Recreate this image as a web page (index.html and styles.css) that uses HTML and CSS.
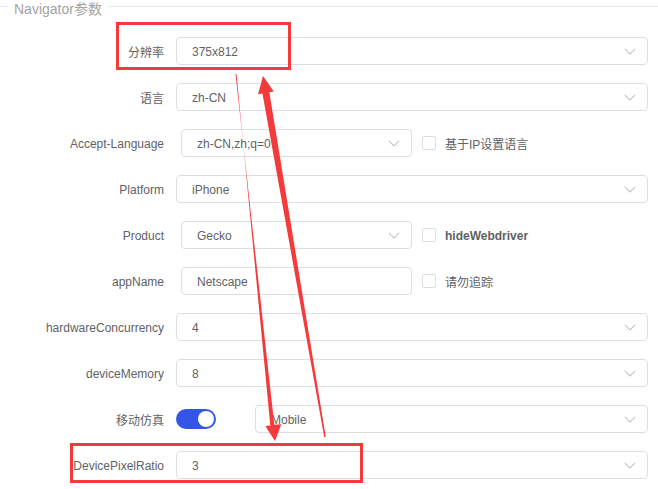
FILE: index.html
```html
<!DOCTYPE html>
<html lang="zh-CN">
<head>
<meta charset="utf-8">
<title>Navigator参数</title>
<link rel="stylesheet" href="styles.css">
</head>
<body>
<div class="panel">
  <div class="legend">
    <span class="legend-line short"></span>
    <span class="legend-text">Navigator参数</span>
    <span class="legend-line long"></span>
  </div>
  <div class="form">
    <div class="row">
      <span class="label">分辨率</span>
      <div class="select full"><span class="value">375x812</span><svg class="chev" viewBox="0 0 12 7" width="12" height="7"><path d="M0.8 0.8L6 6L11.2 0.8"/></svg></div>
    </div>
    <div class="row">
      <span class="label">语言</span>
      <div class="select full"><span class="value">zh-CN</span><svg class="chev" viewBox="0 0 12 7" width="12" height="7"><path d="M0.8 0.8L6 6L11.2 0.8"/></svg></div>
    </div>
    <div class="row">
      <span class="label">Accept-Language</span>
      <div class="select half"><span class="value">zh-CN,zh;q=0.</span><svg class="chev" viewBox="0 0 12 7" width="12" height="7"><path d="M0.8 0.8L6 6L11.2 0.8"/></svg></div>
      <span class="checkbox"></span><span class="check-text">基于IP设置语言</span>
    </div>
    <div class="row">
      <span class="label">Platform</span>
      <div class="select full"><span class="value">iPhone</span><svg class="chev" viewBox="0 0 12 7" width="12" height="7"><path d="M0.8 0.8L6 6L11.2 0.8"/></svg></div>
    </div>
    <div class="row">
      <span class="label">Product</span>
      <div class="select half"><span class="value">Gecko</span><svg class="chev" viewBox="0 0 12 7" width="12" height="7"><path d="M0.8 0.8L6 6L11.2 0.8"/></svg></div>
      <span class="checkbox"></span><span class="check-text bold">hideWebdriver</span>
    </div>
    <div class="row">
      <span class="label">appName</span>
      <div class="select half"><span class="value">Netscape</span></div>
      <span class="checkbox"></span><span class="check-text">请勿追踪</span>
    </div>
    <div class="row">
      <span class="label">hardwareConcurrency</span>
      <div class="select full"><span class="value">4</span><svg class="chev" viewBox="0 0 12 7" width="12" height="7"><path d="M0.8 0.8L6 6L11.2 0.8"/></svg></div>
    </div>
    <div class="row">
      <span class="label">deviceMemory</span>
      <div class="select full"><span class="value">8</span><svg class="chev" viewBox="0 0 12 7" width="12" height="7"><path d="M0.8 0.8L6 6L11.2 0.8"/></svg></div>
    </div>
    <div class="row">
      <span class="label">移动仿真</span>
      <span class="switch"><span class="knob"></span></span>
      <div class="select mobile"><span class="value">Mobile</span><svg class="chev" viewBox="0 0 12 7" width="12" height="7"><path d="M0.8 0.8L6 6L11.2 0.8"/></svg></div>
    </div>
    <div class="row">
      <span class="label">DevicePixelRatio</span>
      <div class="select full"><span class="value">3</span><svg class="chev" viewBox="0 0 12 7" width="12" height="7"><path d="M0.8 0.8L6 6L11.2 0.8"/></svg></div>
    </div>
  </div>
  <svg class="annot" viewBox="0 0 658 489" width="658" height="489">
    <rect x="117.5" y="23.5" width="172" height="45"/>
    <rect x="71.5" y="444.5" width="290" height="37"/>
    <polygon class="arrow" points="235.5,74.05 274.3,424.7 281.3,424.3 275,441 265.3,425.9 270.3,425.5 236.5,73.95"/>
    <polygon class="arrow" points="324.26,437.13 262.45,93.39 258,94.15 263,76 273.8,91.45 269.35,92.21 325.74,436.87"/>
  </svg>
</div>
</body>
</html>
```
FILE: styles.css
```css
html, body {
  margin: 0;
  padding: 0;
  background: #ffffff;
}

body {
  font-family: "Liberation Sans", "Noto Sans CJK SC", sans-serif;
  font-size: 12px;
  color: #606266;
}

.panel {
  position: relative;
  width: 658px;
  height: 489px;
  overflow: hidden;
}

.legend {
  display: flex;
  align-items: flex-start;
  height: 20px;
}

.legend-line {
  height: 1px;
  margin-top: 6px;
  background: #e9ebf0;
}

.legend-line.short {
  width: 8px;
}

.legend-line.long {
  flex: 1;
}

.legend-text {
  padding: 0 5px 0 6px;
  font-size: 14px;
  line-height: 19px;
  color: #a3a3a3;
}

.form {
  padding: 17px 10px 0 0;
}

.row {
  display: flex;
  align-items: center;
  height: 28px;
  margin-bottom: 18px;
}

.label {
  width: 176px;
  box-sizing: border-box;
  padding: 1px 12px 0 0;
  text-align: right;
  flex-shrink: 0;
}

.value {
  padding-top: 1px;
}

.select {
  display: flex;
  align-items: center;
  justify-content: space-between;
  height: 28px;
  box-sizing: border-box;
  border: 1px solid #dcdfe6;
  border-radius: 4px;
  padding: 0 11px 0 15px;
  background: #fff;
  white-space: nowrap;
  overflow: hidden;
}

.select.full {
  flex: 1;
}

.select.half {
  width: 231px;
  margin-left: 5px;
  flex-shrink: 0;
}

.select.mobile {
  flex: 1;
  margin-left: 39px;
}

.chev {
  flex-shrink: 0;
  fill: none;
  stroke: #c0c4cc;
  stroke-width: 1.1;
}

.checkbox {
  width: 14px;
  height: 14px;
  box-sizing: border-box;
  border: 1px solid #dcdfe6;
  border-radius: 2px;
  margin-left: 10px;
  flex-shrink: 0;
}

.check-text {
  margin-left: 9px;
  padding-top: 1px;
}

.check-text.bold {
  font-weight: bold;
}

.switch {
  display: flex;
  align-items: center;
  justify-content: flex-end;
  width: 40px;
  height: 20px;
  box-sizing: border-box;
  padding: 2px;
  border-radius: 10px;
  background: #3456e6;
  flex-shrink: 0;
}

.knob {
  width: 16px;
  height: 16px;
  border-radius: 50%;
  background: #ffffff;
}

.annot {
  position: absolute;
  left: 0;
  top: 0;
  pointer-events: none;
}

.annot rect {
  fill: none;
  stroke: #f43a3a;
  stroke-width: 3;
}

.annot .arrow {
  fill: #f43a3a;
}
```
